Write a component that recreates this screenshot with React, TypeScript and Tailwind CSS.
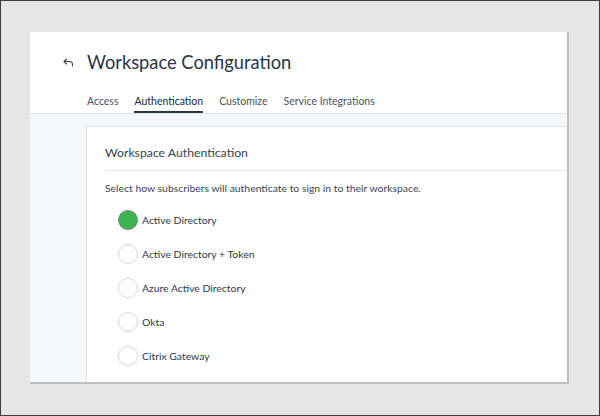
import React from "react";

const tabs = ["Access", "Authentication", "Customize", "Service Integrations"];

const options = [
  "Active Directory",
  "Active Directory + Token",
  "Azure Active Directory",
  "Okta",
  "Citrix Gateway",
];

function BackIcon() {
  return (
    <svg width="11" height="9" viewBox="0 0 11 9" fill="none" className="text-[#3b4454]">
      <path
        d="M3.5 1 1 3.5 3.5 6M1 3.5h5.5a3 3 0 0 1 3 3V8"
        stroke="currentColor"
        strokeWidth="1.1"
        strokeLinecap="round"
        strokeLinejoin="round"
      />
    </svg>
  );
}

function Radio({ checked }: { checked: boolean }) {
  return checked ? (
    <span className="w-[20px] h-[20px] rounded-full border-[1.5px] border-[#7d8185] bg-[#3fb34f] shrink-0" />
  ) : (
    <span className="w-[20px] h-[20px] rounded-full border-[1.5px] border-[#d3d5d8] bg-white shrink-0" />
  );
}

export default function App() {
  const selected = 0;
  return (
    <div
      className="w-[600px] h-[416px] bg-[#e6e6e6] border border-[#3c3c3c] pt-[31px] pl-[29px] overflow-hidden"
      style={{ fontFamily: "Lato, 'Open Sans', sans-serif" }}
    >
      <div className="w-[539px] h-[352px] bg-white flex flex-col border-r-2 border-b-2 border-[#bcc0c6]">
        {/* Header */}
        <div className="border-b border-[#e1e5ea]">
          <div className="flex items-center pt-[18px] pl-[33px]">
            <BackIcon />
            <h1 className="ml-[13px] text-[18.3px] leading-[24px] text-[#2b3444]">
              Workspace Configuration
            </h1>
          </div>
          <div className="flex gap-[16px] pl-[57px] mt-[20px]">
            {tabs.map((t) => (
              <div
                key={t}
                className={`text-[10.5px] leading-[14px] pb-[3px] border-b-2 ${
                  t === "Authentication"
                    ? "border-[#2c3548] text-[#1f2938]"
                    : "border-transparent text-[#4a5361]"
                }`}
              >
                {t}
              </div>
            ))}
          </div>
        </div>

        {/* Body */}
        <div className="flex-1 bg-[#f4f6f9] pl-[56px] pt-[12px] flex flex-col">
          <div className="flex-1 bg-white border-l border-t border-[#e4e8ec] pl-[18px]">
            <h2 className="pt-[17px] pb-[8px] text-[12.25px] leading-[18px] text-[#3a4350] border-b border-[#e3e6ea]">
              Workspace Authentication
            </h2>
            <p className="mt-[10px] text-[10.4px] leading-[14px] text-[#3c4553]">
              Select how subscribers will authenticate to sign in to their workspace.
            </p>
            <div className="mt-[15px] ml-[13px] flex flex-col gap-[14px]">
              {options.map((o, i) => (
                <div key={o} className="flex items-center gap-[4px]">
                  <Radio checked={i === selected} />
                  <span className="text-[10.4px] leading-[14px] text-[#2f3846]">{o}</span>
                </div>
              ))}
            </div>
          </div>
        </div>
      </div>
    </div>
  );
}
